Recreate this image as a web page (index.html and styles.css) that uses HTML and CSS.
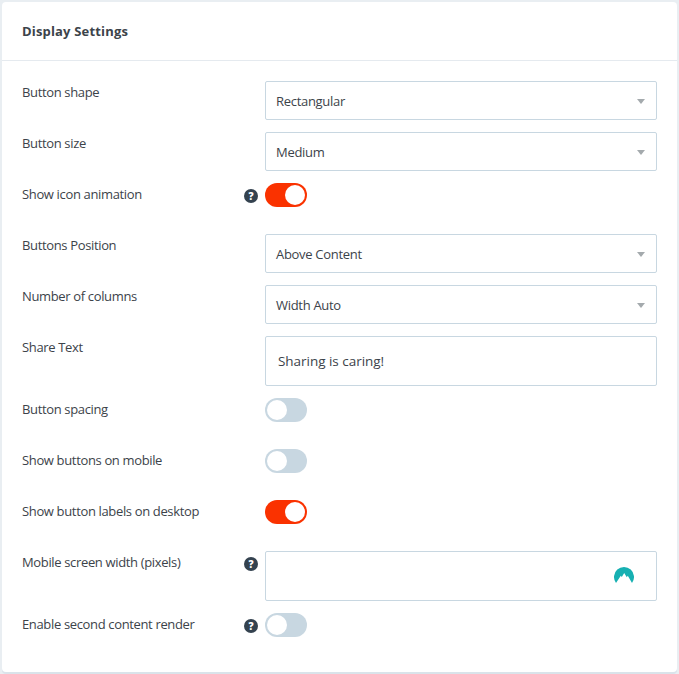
FILE: index.html
```
<!DOCTYPE html>
<html lang="en">
<head>
<meta charset="utf-8">
<title>Display Settings</title>
<link rel="stylesheet" href="styles.css">
</head>
<body>
<main class="card">
  <h1 class="card-header">Display Settings</h1>
  <div class="rows">
    <div class="row"><div class="label"><span>Button shape</span></div><div class="select"><span>Rectangular</span><i class="caret"></i></div></div>
    <div class="row"><div class="label"><span>Button size</span></div><div class="select"><span>Medium</span><i class="caret"></i></div></div>
    <div class="row"><div class="label"><span>Show icon animation</span><b class="help">?</b></div><div class="toggle on"></div></div>
    <div class="row"><div class="label"><span>Buttons Position</span></div><div class="select"><span>Above Content</span><i class="caret"></i></div></div>
    <div class="row"><div class="label"><span>Number of columns</span></div><div class="select"><span>Width Auto</span><i class="caret"></i></div></div>
    <div class="row"><div class="label"><span>Share Text</span></div><div class="input"><span>Sharing is caring!</span></div></div>
    <div class="row"><div class="label"><span>Button spacing</span></div><div class="toggle"></div></div>
    <div class="row"><div class="label"><span>Show buttons on mobile</span></div><div class="toggle"></div></div>
    <div class="row"><div class="label"><span>Show button labels on desktop</span></div><div class="toggle on"></div></div>
    <div class="row"><div class="label"><span>Mobile screen width (pixels)</span><b class="help">?</b></div><div class="input"><svg class="mountain" viewBox="0 0 20 16" width="20" height="16"><path fill="#17b0b2" d="M2 16A10 10 0 1 1 18 16L13.8 8.8L12.8 10.2L10.2 6L7.8 10L6.8 8.8Z"/></svg></div></div>
    <div class="row"><div class="label"><span>Enable second content render</span><b class="help">?</b></div><div class="toggle"></div></div>
  </div>
</main>
</body>
</html>
```
FILE: styles.css
```
* { box-sizing: border-box; }
body {
  margin: 0;
  padding: 2px;
  background: #e9eef2;
  font: 13px/20px "Open Sans", "Noto Sans", sans-serif;
  color: #3c434a;
}
.card {
  height: 670px;
  background: #fff;
  border-radius: 4px;
  box-shadow: 0 2px 0 #dae3ea;
}
.card-header {
  height: 59px;
  margin: 0;
  padding: 19px 20px;
  border-bottom: 1px solid #e5eaef;
  font-size: 13px;
  line-height: 20px;
  font-weight: 700;
  letter-spacing: 0.17px;
}
.rows {
  display: flex;
  flex-direction: column;
  gap: 12px;
  padding: 20px 20px 0;
}
.row {
  display: grid;
  grid-template-columns: 243px 1fr;
  align-items: start;
  min-height: 39px;
}
.label {
  display: flex;
  justify-content: space-between;
  padding: 1px 7px 0 0;
  letter-spacing: -0.35px;
}
.help {
  width: 14px;
  height: 14px;
  margin-top: 5px;
  border-radius: 50%;
  background: #34424f;
  color: #fff;
  font-size: 10px;
  font-weight: 800;
  letter-spacing: 0;
  line-height: 14px;
  text-align: center;
}
.select, .input {
  display: flex;
  align-items: center;
  justify-content: space-between;
  border: 1px solid #c8d7e1;
  border-radius: 2px;
}
.select { height: 39px; padding: 1px 11px 0 10px; letter-spacing: -0.3px; }
.input { height: 50px; padding: 0 22px 0 12px; font-size: 13.5px; letter-spacing: -0.03px; }
.caret {
  border: 4px solid transparent;
  border-top: 5px solid #a4aaad;
  border-bottom: 0;
}
.toggle {
  width: 42px;
  height: 24px;
  padding: 2px;
  border-radius: 12px;
  background: #c8d7e1;
}
.toggle::before {
  content: "";
  display: block;
  width: 20px;
  height: 20px;
  border-radius: 50%;
  background: #fff;
}
.toggle.on { background: #fa3200; }
.toggle.on::before { margin-left: auto; }
.mountain { display: block; margin: 0 0 2px auto; }
```
